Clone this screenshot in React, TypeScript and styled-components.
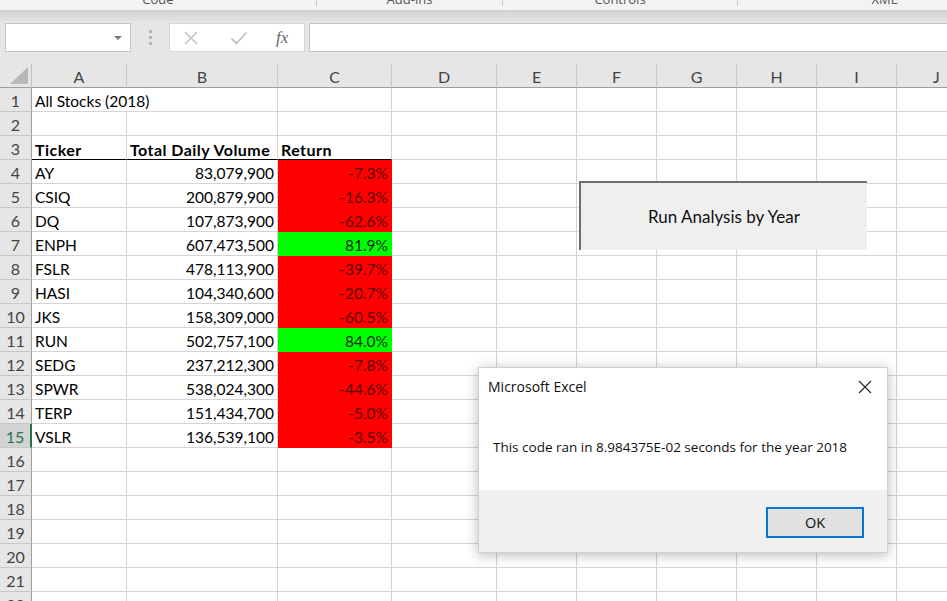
import React from "react";
import styled, { createGlobalStyle } from "styled-components";

const GlobalStyle = createGlobalStyle`
  html, body { margin: 0; padding: 0; overflow: hidden; }
  body { font-family: Lato, "Liberation Sans", sans-serif; }
  * { box-sizing: border-box; }
`;

const Page = styled.div`
  position: relative;
  width: 947px;
  height: 601px;
  overflow: hidden;
  background: #e6e6e6;
`;

const Ribbon = styled.div`
  display: flex;
  height: 10px;
  background: #f3f3f3;
  overflow: hidden;
`;

const RibbonGroup = styled.div<{ $w: number }>`
  flex: 0 0 ${(p) => p.$w}px;
  border-right: 1px solid #c8c8c8;
  height: 6px;
  text-align: center;
  font-family: "Open Sans", sans-serif;
  font-size: 13px;
  line-height: 13px;
  color: #555;
  overflow: visible;
`;

const RibbonLabel = styled.div`
  margin-top: -7px;
`;

const Shade = styled.div`
  height: 13px;
  background: linear-gradient(#d2d2d2, #e6e6e6);
`;

const FormulaBar = styled.div`
  display: flex;
  align-items: center;
  height: 29px;
  padding-left: 5px;
`;

const NameBox = styled.div`
  width: 126px;
  height: 29px;
  background: #fff;
  border: 1px solid #c6c6c6;
  display: flex;
  align-items: center;
  justify-content: flex-end;
  padding-right: 8px;
`;

const Caret = styled.div`
  width: 0;
  height: 0;
  border-left: 4px solid transparent;
  border-right: 4px solid transparent;
  border-top: 4px solid #777;
`;

const Grip = styled.div`
  width: 38px;
  display: flex;
  flex-direction: column;
  align-items: center;
  gap: 3px;
`;

const GripDot = styled.div`
  width: 3px;
  height: 3px;
  background: #b4b4b4;
`;

const FxBox = styled.div`
  width: 136px;
  height: 29px;
  background: #fff;
  border: 1px solid #d6d6d6;
  display: flex;
  align-items: center;
  padding-left: 13px;
  gap: 31px;
`;

const Fx = styled.span`
  font-family: "Liberation Serif", serif;
  font-style: italic;
  font-size: 17px;
  color: #666;
  margin-left: -3px;
`;

const FormulaInput = styled.div`
  flex: 1;
  height: 29px;
  margin-left: 4px;
  margin-right: -4px;
  background: #fff;
  border: 1px solid #c6c6c6;
`;

const Gap = styled.div`
  height: 12px;
`;

const Sheet = styled.div`
  display: grid;
  grid-template-columns: 32px 95px 151px 114px 105px repeat(6, 80px);
  grid-auto-rows: 24px;
  background: #fff;
`;

const Corner = styled.div`
  background: #e6e6e6;
  border-right: 1px solid #c0c0c0;
  border-bottom: 1px solid #9e9e9e;
  display: flex;
  align-items: flex-end;
  justify-content: flex-end;
  padding: 0 3px 3px 0;
`;

const ColHead = styled.div`
  background: #e6e6e6;
  border-bottom: 1px solid #9e9e9e;
  border-right: 1px solid #c8c8c8;
  display: flex;
  align-items: center;
  justify-content: center;
  font-size: 16px;
  color: #444;
  padding-top: 1px;
`;

const RowHead = styled.div<{ $sel?: boolean }>`
  background: ${(p) => (p.$sel ? "#d3d3d3" : "#e6e6e6")};
  border-right: ${(p) => (p.$sel ? "2px solid #217346" : "1px solid #9e9e9e")};
  border-bottom: 1px solid #c8c8c8;
  display: flex;
  align-items: center;
  justify-content: center;
  font-size: 16px;
  color: ${(p) => (p.$sel ? "#217346" : "#444")};
  padding-top: 2px;
`;

const Cell = styled.div<{
  $right?: boolean;
  $bold?: boolean;
  $fill?: string;
  $under?: boolean;
  $ink?: string;
  $span?: number;
}>`
  grid-column: span ${(p) => p.$span || 1};
  background: ${(p) => p.$fill || "#fff"};
  border-right: 1px solid ${(p) => p.$fill || "#d4d4d4"};
  border-bottom: 1px solid ${(p) => (p.$under ? "#000" : p.$fill || "#d4d4d4")};
  display: flex;
  align-items: center;
  justify-content: ${(p) => (p.$right ? "flex-end" : "flex-start")};
  padding: 3px 3px 0 3px;
  font-size: ${(p) => (p.$bold ? "16px" : "15.5px")};
  letter-spacing: ${(p) => (p.$bold ? "0.45px" : "0")};
  font-weight: ${(p) => (p.$bold ? 700 : 400)};
  color: ${(p) => p.$ink || "#000"};
  white-space: nowrap;
`;

const FormButton = styled.div`
  position: absolute;
  left: 579px;
  top: 181px;
  width: 288px;
  height: 69px;
  background: #efefef;
  border-top: 2px solid #6e6e6e;
  border-left: 2px solid #6e6e6e;
  display: flex;
  align-items: center;
  justify-content: center;
  font-size: 17px;
  color: #111;
`;

const Dialog = styled.div`
  position: absolute;
  left: 478px;
  top: 367px;
  width: 410px;
  height: 186px;
  background: #f0f0f0;
  border: 1px solid #d0d0d0;
  box-shadow: 0 2px 12px rgba(0, 0, 0, 0.28);
  display: flex;
  flex-direction: column;
  font-family: "Open Sans", sans-serif;
  color: #111;
`;

const DialogBody = styled.div`
  background: #fff;
  height: 122px;
  display: flex;
  flex-direction: column;
`;

const TitleRow = styled.div`
  display: flex;
  align-items: center;
  justify-content: space-between;
  height: 37px;
  padding: 0 15px 0 9px;
  font-size: 14px;
`;

const Message = styled.div`
  padding: 0 0 0 14px;
  margin-top: 33px;
  font-size: 13.5px;
`;

const DialogFooter = styled.div`
  flex: 1;
  display: flex;
  align-items: center;
  justify-content: flex-end;
  padding-right: 23px;
`;

const OkButton = styled.div`
  width: 98px;
  height: 31px;
  border: 2px solid #0078d7;
  background: #e1e1e1;
  display: flex;
  align-items: center;
  justify-content: center;
  font-size: 14.5px;
  margin-top: 2px;
`;

const cols = ["A", "B", "C", "D", "E", "F", "G", "H", "I", "J"];

const data: [string, string, string][] = [
  ["AY", "83,079,900", "-7.3%"],
  ["CSIQ", "200,879,900", "-16.3%"],
  ["DQ", "107,873,900", "-62.6%"],
  ["ENPH", "607,473,500", "81.9%"],
  ["FSLR", "478,113,900", "-39.7%"],
  ["HASI", "104,340,600", "-20.7%"],
  ["JKS", "158,309,000", "-60.5%"],
  ["RUN", "502,757,100", "84.0%"],
  ["SEDG", "237,212,300", "-7.8%"],
  ["SPWR", "538,024,300", "-44.6%"],
  ["TERP", "151,434,700", "-5.0%"],
  ["VSLR", "136,539,100", "-3.5%"],
];

type CellDef = {
  text?: string;
  right?: boolean;
  bold?: boolean;
  fill?: string;
  under?: boolean;
  ink?: string;
  span?: number;
};

function rowCells(r: number): CellDef[] {
  if (r === 1) {
    return [{ text: "All Stocks (2018)", span: 2 }, ...cols.slice(2).map(() => ({}))];
  }
  const out: CellDef[] = cols.map(() => ({}));
  if (r === 3) {
    out[0] = { text: "Ticker", bold: true, under: true };
    out[1] = { text: "Total Daily Volume", bold: true, under: true };
    out[2] = { text: "Return", bold: true, under: true };
  }
  if (r >= 4 && r <= 15) {
    const [t, v, ret] = data[r - 4];
    const pos = !ret.startsWith("-");
    out[0] = { text: t };
    out[1] = { text: v, right: true };
    out[2] = {
      text: ret,
      right: true,
      fill: pos ? "#00ff00" : "#ff0000",
      ink: pos ? "#0b2a0b" : "#5a0000",
    };
  }
  return out;
}

const XIcon = () => (
  <svg width="16" height="16" viewBox="0 0 16 16">
    <path d="M2 2 L14 14 M14 2 L2 14" stroke="#c4c4c4" strokeWidth="1.6" fill="none" />
  </svg>
);

const CheckIcon = () => (
  <svg width="18" height="16" viewBox="0 0 18 16">
    <path d="M1.5 8.5 L6.5 13.5 L16.5 2.5" stroke="#c4c4c4" strokeWidth="1.8" fill="none" />
  </svg>
);

const CloseIcon = () => (
  <svg width="14" height="14" viewBox="0 0 14 14">
    <path d="M1 1 L13 13 M13 1 L1 13" stroke="#222" strokeWidth="1.1" fill="none" />
  </svg>
);

const CornerTri = () => (
  <svg width="18" height="17" viewBox="0 0 18 17">
    <path d="M18 0 L18 17 L0 17 Z" fill="#b8b8b8" />
  </svg>
);

export default function App() {
  const rows = Array.from({ length: 22 }, (_, i) => i + 1);
  return (
    <Page>
      <GlobalStyle />
      <Ribbon>
        <RibbonGroup $w={317}><RibbonLabel>Code</RibbonLabel></RibbonGroup>
        <RibbonGroup $w={186}><RibbonLabel>Add-ins</RibbonLabel></RibbonGroup>
        <RibbonGroup $w={235}><RibbonLabel>Controls</RibbonLabel></RibbonGroup>
        <RibbonGroup $w={294}><RibbonLabel>XML</RibbonLabel></RibbonGroup>
      </Ribbon>
      <Shade />
      <FormulaBar>
        <NameBox>
          <Caret />
        </NameBox>
        <Grip>
          <GripDot />
          <GripDot />
          <GripDot />
        </Grip>
        <FxBox>
          <XIcon />
          <CheckIcon />
          <Fx>fx</Fx>
        </FxBox>
        <FormulaInput />
      </FormulaBar>
      <Gap />
      <Sheet>
        <Corner>
          <CornerTri />
        </Corner>
        {cols.map((c) => (
          <ColHead key={c}>{c}</ColHead>
        ))}
        {rows.map((r) => (
          <React.Fragment key={r}>
            <RowHead $sel={r === 15}>{r}</RowHead>
            {rowCells(r).map((c, i) => (
              <Cell
                key={i}
                $right={c.right}
                $bold={c.bold}
                $fill={c.fill}
                $under={c.under}
                $ink={c.ink}
                $span={c.span}
              >
                {c.text}
              </Cell>
            ))}
          </React.Fragment>
        ))}
      </Sheet>
      <FormButton>Run Analysis by Year</FormButton>
      <Dialog>
        <DialogBody>
          <TitleRow>
            <span>Microsoft Excel</span>
            <CloseIcon />
          </TitleRow>
          <Message>This code ran in 8.984375E-02 seconds for the year 2018</Message>
        </DialogBody>
        <DialogFooter>
          <OkButton>OK</OkButton>
        </DialogFooter>
      </Dialog>
    </Page>
  );
}
